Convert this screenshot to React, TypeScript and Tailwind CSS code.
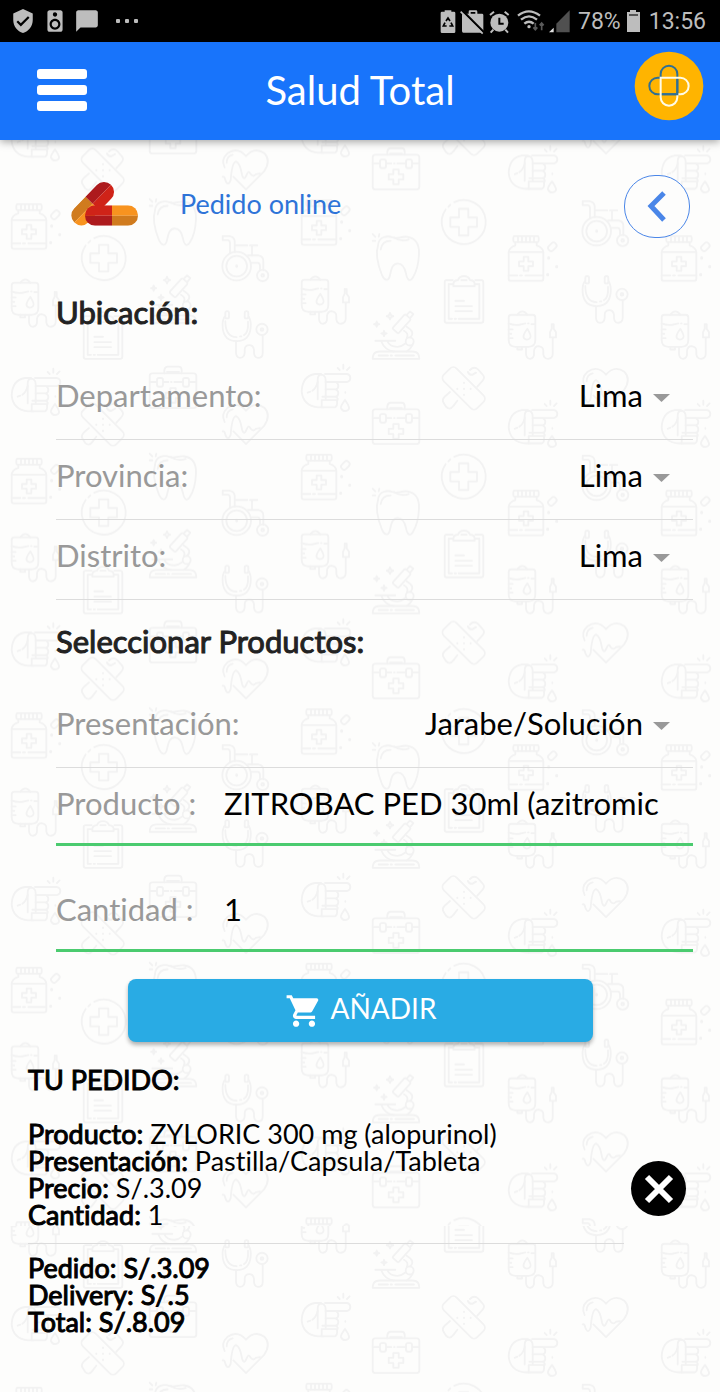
import React, { useState } from "react";
import { MdChatBubble, MdShoppingCart, MdSpeaker, MdVerifiedUser } from "react-icons/md";

type Glyph =
  | "hand" | "bottle" | "bag" | "bandage" | "plus" | "clipboard"
  | "case" | "tooth" | "scope" | "heart" | "chair" | "steth";

const glyphs: Record<Glyph, React.ReactNode> = {
  hand: (
    <>
      <path d="M60 30H42Q4 36 2 82Q6 126 52 130H66" />
      <path d="M72 30H138Q148 32 148 42Q148 52 138 54H74" />
      <path d="M50 106V48Q50 32 62 32Q74 34 74 50V106" />
      <path d="M74 54H104Q112 58 112 65Q112 75 104 76H74M104 76Q112 80 112 87Q112 97 104 98H64M104 98Q112 102 110 108H62V130H102Q110 126 108 110" />
      <path d="M20 86L28 83M34 80Q46 72 50 54M110 12L116 18M127 2V14M146 10L138 18M133 84V86" />
      <path d="M132 108Q118 126 120 132Q124 142 134 141Q146 138 144 130Q142 122 132 108Z" />
    </>
  ),
  bottle: (
    <>
      <rect x="16" y="2" width="76" height="18" rx="4" />
      <path d="M30 4V20M42 4V20M54 4V20M66 4V20M78 4V20" />
      <path d="M22 20V30Q2 36 2 52V130Q2 136 8 136H100Q106 136 106 130V52Q106 36 86 30V20" />
      <path d="M2 50H106M2 120H28M36 120H42M52 120H106" />
      <path d="M47 64H61V78H75V92H61V106H47V92H33V78H47Z" />
      <rect x="124" y="20" width="18" height="28" rx="8" transform="rotate(45 133 34)" />
      <path d="M122 67V68M146 93V94M119 117V118" strokeWidth="9" />
    </>
  ),
  bag: (
    <>
      <path d="M10 10H74Q82 10 82 18V86Q82 106 62 106H22Q2 106 2 86V18Q2 10 10 10Z" />
      <path d="M28 10Q34 0 43 0Q52 0 58 10M2 36Q22 44 42 38L52 36M60 36H62M70 38H82" />
      <path d="M2 54H14M2 67H10M2 80H14M58 52Q40 76 50 82Q58 88 66 80Q72 74 58 52Z" />
      <path d="M28 106V114H42V106M54 106V128Q56 142 66 142Q78 140 78 128V118Q80 104 92 104Q106 106 106 118V128Q108 142 120 142Q134 140 134 128V80" />
      <path d="M126 78V62L131 52V38H137V52L144 62V78Z" />
    </>
  ),
  bandage: (
    <>
      <path d="M84 12Q96 0 108 10L122 26Q130 34 122 44L106 62M46 104L34 120Q24 134 12 122L6 112Q-2 102 8 92L24 78" />
      <rect x="-6" y="40" width="142" height="54" rx="14" transform="rotate(45 65 67)" />
      <path d="M78 18Q82 28 92 26L102 20M66 50V51M46 68V69M66 68V69M86 68V69M66 86V87" strokeWidth="6" />
    </>
  ),
  plus: (
    <>
      <path d="M40 8A66 66 0 1 1 14 30M22 22L28 16" />
      <path d="M54 28H82V54H108V82H82V108H54V82H28V54H54Z" />
    </>
  ),
  clipboard: (
    <>
      <path d="M26 14H8Q2 14 2 20V136Q2 142 8 142H112Q118 142 118 136V20Q118 14 112 14H94" />
      <path d="M28 26H14V130H24M32 130H36M44 130H106V26H92" />
      <path d="M28 32V24Q30 14 42 14Q46 2 60 2Q74 2 78 14Q90 14 92 24V32ZM52 14H68M34 76H60M34 92H84M34 107H84" />
    </>
  ),
  case: (
    <>
      <rect x="2" y="22" width="140" height="104" rx="8" />
      <path d="M46 22V12Q48 2 56 2H88Q98 2 98 12V22M54 18H90" />
      <rect x="24" y="36" width="18" height="26" rx="6" />
      <rect x="102" y="36" width="18" height="26" rx="6" />
      <path d="M2 48H22M44 48H58M66 48H68M76 48H102M122 48H142" />
      <path d="M64 66H80V80H94V96H80V110H64V96H50V80H64Z" />
    </>
  ),
  tooth: (
    <>
      <path d="M18 36C20 8 48 6 62 12C76 18 86 8 106 10C132 14 142 30 141 60C140 90 134 115 122 133C112 148 104 135 102 120C98 100 90 90 77 90C62 90 58 105 54 125C50 145 38 142 30 125C18 95 10 60 18 36Z" />
      <path d="M26 48Q30 22 56 22M66 12Q86 26 110 18M2 2L10 10M2 22H10M22 2L20 10" />
    </>
  ),
  scope: (
    <>
      <path d="M2 142Q2 120 22 120H122Q142 120 142 142ZM20 132H48M56 132H60M70 132H126" />
      <path d="M10 88H70M28 90Q38 116 66 120M46 90Q54 106 76 106Q88 106 100 96M104 46Q132 62 114 78M122 100Q116 112 104 120M96 58Q112 66 104 80" />
      <circle cx="113" cy="90" r="12" />
      <rect x="77" y="8" width="24" height="58" rx="5" transform="rotate(42 89 37)" />
      <path d="M106 8L114 0L124 8L116 18" />
      <path d="M54 4L57 11L64 14L57 17L54 24L51 17L44 14L51 11ZM14 30L16 36L22 38L16 40L14 46L12 40L6 38L12 36ZM36 58L38 64L44 66L38 68L36 74L34 68L28 66L34 64Z" />
    </>
  ),
  heart: (
    <>
      <path d="M34 82L72 120L126 66Q148 34 128 12Q98 -10 72 20Q46 -10 16 12Q-4 30 8 54" />
      <path d="M2 82Q8 80 10 92Q18 112 26 92Q30 38 42 36Q54 40 60 76Q66 96 74 76Q80 60 86 74Q94 84 102 74L114 72M14 40Q14 20 32 16" />
    </>
  ),
  chair: (
    <>
      <path d="M2 14V2H22Q36 4 38 16V50M2 14H18Q24 16 24 22V52M40 30H76M84 30H106M90 30V60" />
      <circle cx="44" cy="92" r="43" />
      <circle cx="44" cy="92" r="31" />
      <path d="M44 91V93" strokeWidth="8" />
      <path d="M78 60H110Q124 62 124 76V104M88 82H108Q114 84 114 92V104" />
      <circle cx="122" cy="120" r="17" />
      <circle cx="122" cy="120" r="4" />
    </>
  ),
  steth: (
    <>
      <path d="M8 18Q0 30 2 52Q6 92 44 92Q82 92 86 52Q88 30 80 18M10 32Q10 80 44 80M54 78H58M66 74Q80 66 78 34" />
      <rect x="10" y="2" width="11" height="22" rx="5" />
      <rect x="68" y="2" width="11" height="22" rx="5" />
      <circle cx="120" cy="57" r="17" />
      <circle cx="120" cy="57" r="4" />
      <path d="M42 92V128Q44 142 54 142Q66 142 68 128V118Q68 104 82 104Q94 104 96 118V128Q98 142 108 142Q122 142 122 128V76" />
    </>
  ),
};

// Each entry: glyph, x and y inside one repeat of the wallpaper.
const wallpaper: [Glyph, number, number][] = [
  ["hand", 11, 6], ["bottle", 11, 96], ["bag", 11, 172],
  ["bandage", 81, 40], ["plus", 81, 128], ["clipboard", 83, 204],
  ["case", 149, 4], ["tooth", 149, 91], ["scope", 149, 168],
  ["heart", 222, 42], ["chair", 222, 128], ["steth", 222, 203],
  ["hand", 301, 2], ["bottle", 301, 92], ["bag", 301, 169],
  ["case", 372, 40], ["tooth", 372, 126], ["scope", 372, 204],
  ["bandage", 442, 4], ["plus", 441, 92], ["clipboard", 444, 168],
  ["hand", 508, 38], ["bottle", 508, 128], ["bag", 508, 204],
  ["heart", 582, 6], ["chair", 582, 93], ["steth", 582, 168],
  ["hand", 661, 38], ["bottle", 661, 128], ["bag", 661, 204],
];

function Wallpaper() {
  return (
    <svg className="absolute inset-0 h-full w-full" aria-hidden="true">
      <defs>
        <g id="medical-tile" fill="none" stroke="#f2f2f2" strokeWidth="5.5" strokeLinecap="round" strokeLinejoin="round">
          {wallpaper.map(([name, x, y], i) => (
            <g key={i} transform={`translate(${x} ${y}) scale(0.3333)`}>{glyphs[name]}</g>
          ))}
        </g>
        <pattern id="upper" patternUnits="userSpaceOnUse" x="0" y="-32.5" width="720" height="254.5">
          <use href="#medical-tile" />
        </pattern>
        <pattern id="lower" patternUnits="userSpaceOnUse" x="0" y="133" width="720" height="254.5">
          <use href="#medical-tile" />
        </pattern>
      </defs>
      <rect width="100%" height="1086" fill="url(#upper)" />
      <rect y="1086" width="100%" height="100%" fill="url(#lower)" />
    </svg>
  );
}

function StatusBar() {
  return (
    <div className="flex h-[42px] items-center justify-between bg-black pl-[10px] pr-[14px] text-[#bdbdbd]">
      <div className="flex items-center gap-[6px]">
        <MdVerifiedUser size={26} />
        <MdSpeaker size={26} />
        <MdChatBubble size={26} />
        <svg width="26" height="6" viewBox="0 0 26 6" fill="currentColor" className="ml-2">
          <rect x="2" y="1" width="4" height="4" rx="1" />
          <rect x="11" y="1" width="4" height="4" rx="1" />
          <rect x="20" y="1" width="4" height="4" rx="1" />
        </svg>
      </div>
      <div className="flex items-center pt-[2px] font-['Roboto',sans-serif] text-[23px]">
        <svg width="132" height="26" viewBox="0 0 396 78" fill="currentColor">
          <path d="M14 8V4H34V8H42Q46 8 46 12V68Q46 72 42 72H6Q2 72 2 68V12Q2 8 6 8Z" />
          <g fill="none" stroke="#000" strokeWidth="5">
            <path d="M18 36L24 27L30 36M15 41L10 51H20M28 51H38L33 41" />
          </g>
          <path fillRule="evenodd" d="M86 14V8Q86 4 90 4H108Q112 4 112 8V14H126Q130 14 130 18V68L126 71H70Q66 71 66 66V18Q66 14 70 14ZM92 14H106V9H92Z" />
          <path d="M66 4L134 72" stroke="#000" strokeWidth="7" />
          <path d="M62 8L128 74" stroke="currentColor" strokeWidth="5" />
          <circle cx="178" cy="41" r="27" />
          <path d="M150 18L162 8M206 18L194 8M160 62L152 71M196 62L204 71" stroke="currentColor" strokeWidth="6" />
          <path d="M178 26V44H191" fill="none" stroke="#000" strokeWidth="6" />
          <g fill="none" stroke="currentColor" strokeWidth="7">
            <path d="M234 20Q266 -6 300 20M243 32Q267 12 291 32M253 44Q267 32 281 44" />
          </g>
          <circle cx="267" cy="53" r="5" />
          <g stroke="#5a5a5a" strokeWidth="5" fill="none">
            <path d="M286 42V62M280 55L286 62L292 55M305 64V42M299 49L305 42L311 49" />
          </g>
          <path d="M389 4V70H349V44Z" fill="#505050" />
          <path d="M341 56V70H327Z" fill="#e0e0e0" />
        </svg>
        <span className="ml-[6px]">78%</span>
        <svg width="15" height="24" viewBox="0 0 15 24" className="ml-[5px]">
          <path d="M4 0H10V2H14V22H1V2H4Z" fill="#bdbdbd" />
          <path d="M3 5H12" stroke="#555" strokeWidth="2" />
        </svg>
        <span className="ml-2">13:56</span>
      </div>
    </div>
  );
}

function Header() {
  return (
    <header className="relative z-10 grid h-[98px] grid-cols-[1fr_auto_1fr] items-center bg-[#1874fb] px-4 pb-[2px] shadow-[0_2px_8px_rgba(0,0,0,0.35)]">
      <button aria-label="Menú" className="ml-[21px] flex w-[50px] flex-col gap-[6px]">
        <span className="h-[10px] w-full rounded-[3px] bg-white" />
        <span className="h-[10px] w-full rounded-[3px] bg-white" />
        <span className="h-[10px] w-full rounded-[3px] bg-white" />
      </button>
      <h1 className="text-[40px] leading-[48px] text-white">Salud Total</h1>
      <svg viewBox="0 0 210 210" className="mt-[9px] size-[70px] self-start justify-self-end" aria-hidden="true">
        <circle cx="105" cy="105" r="103" fill="#ffb400" />
        <g fill="none" strokeWidth="6">
          <path d="M80 80V69A25 25 0 0 1 130 69V130H71A25 25 0 0 1 71 80Z" stroke="#2f6f94" />
          <path d="M80 80H139A25 25 0 0 1 139 130H130V139A25 25 0 0 1 80 139Z" stroke="#fffbe6" />
          <path d="M130 84V130H84" stroke="#2f6f94" />
        </g>
      </svg>
    </header>
  );
}

function Pills() {
  return (
    <svg width="69" height="46" viewBox="210 152 207 138" aria-hidden="true">
      <defs>
        <clipPath id="tilted"><rect x="-79" y="-30" width="158" height="60" rx="30" /></clipPath>
        <clipPath id="flat"><rect x="255" y="225" width="159" height="61" rx="30" /></clipPath>
      </defs>
      <g transform="translate(278 220) rotate(-46)" clipPath="url(#tilted)">
        <path d="M-80 -31H0V0H-80Z" fill="#d07b1e" />
        <path d="M-80 0H0V31H-80Z" fill="#f8931f" />
        <path d="M0 -31H80V0H0Z" fill="#ad1a1d" />
        <path d="M0 0H80V31H0Z" fill="#cf2318" />
      </g>
      <g clipPath="url(#flat)">
        <path d="M255 225H336V256H255Z" fill="#cf2318" />
        <path d="M255 256H336V286H255Z" fill="#ad1a1d" />
        <path d="M336 225H414V256H336Z" fill="#f8931f" />
        <path d="M336 256H414V286H336Z" fill="#d07b1e" />
      </g>
    </svg>
  );
}

function SelectRow({ id, label, value }: { id: string; label: string; value: string }) {
  return (
    <div className="flex h-20 items-center justify-between border-b border-[#dcdcdc] pb-[10px] pr-[23px]">
      <label htmlFor={id} className="text-[#999]">{label}</label>
      <div className="flex items-center gap-[10px]">
        <select id={id} className="field-sizing-content appearance-none bg-transparent text-right text-black outline-none">
          <option>{value}</option>
        </select>
        <svg width="17" height="8" viewBox="0 0 17 8" className="mt-[6px]" aria-hidden="true">
          <path d="M0 0H17L8.5 8Z" fill="#999" />
        </svg>
      </div>
    </div>
  );
}

function InputRow({ id, label, initial }: { id: string; label: string; initial: string }) {
  const [value, setValue] = useState(initial);
  return (
    <div className="flex h-[78px] items-center border-b-[3px] border-[#4bcb6f] pb-[6px] pr-[22px]">
      <label htmlFor={id} className="w-[168px] shrink-0 text-[#999]">{label}</label>
      <input
        id={id}
        value={value}
        onChange={(e) => setValue(e.target.value)}
        className="min-w-0 flex-1 bg-transparent text-black outline-none"
      />
    </div>
  );
}

const strong = "font-normal [-webkit-text-stroke:1px_currentColor]";

function Line({ name, value }: { name: string; value: string }) {
  return (
    <p>
      <b className={strong}>{name}</b> {value}
    </p>
  );
}

export default function App() {
  return (
    <div className="flex min-h-screen flex-col bg-[#fdfdfc] font-['Lato','Open_Sans',sans-serif] [font-variant-ligatures:none]">
      <StatusBar />
      <Header />
      <main className="relative flex-1 overflow-hidden">
        <Wallpaper />
        <div className="relative pb-14">
          <div className="flex items-start pl-[70px] pr-[30px] pt-[35px]">
            <div className="pt-[6px]"><Pills /></div>
            <h2 className="ml-[41px] flex-1 pt-[11px] text-[27px] leading-[36px] text-[#2e74d8]">Pedido online</h2>
            <button aria-label="Volver" className="flex h-[63px] w-[66px] items-center justify-center rounded-[31px] border border-[#4a86e8] bg-[#fdfdfc]">
              <svg width="20" height="32" viewBox="0 0 20 32" fill="none" stroke="#4a86e8" strokeWidth="5">
                <path d="M17 2L4 15L17 29" />
              </svg>
            </button>
          </div>

          <form className="pl-14 pr-[27px] text-[31px] leading-[40px]" onSubmit={(e) => e.preventDefault()}>
            <h3 className={`pb-[28px] pt-[54px] text-[#222] ${strong}`}>Ubicación:</h3>
            <SelectRow id="departamento" label="Departamento:" value="Lima" />
            <SelectRow id="provincia" label="Provincia:" value="Lima" />
            <SelectRow id="distrito" label="Distrito:" value="Lima" />
            <h3 className={`pb-[27px] pt-[21px] text-[#222] ${strong}`}>Seleccionar Productos:</h3>
            <SelectRow id="presentacion" label="Presentación:" value="Jarabe/Solución" />
            <InputRow id="producto" label="Producto :" initial="ZITROBAC PED 30ml (azitromic" />
            <div className="h-7" />
            <InputRow id="cantidad" label="Cantidad :" initial="1" />
            <button
              type="submit"
              className="ml-[72px] mr-[100px] mt-[27px] flex h-[63px] w-[calc(100%-172px)] items-center justify-center gap-2 rounded-lg bg-[#29abe4] text-[28px] text-white shadow-[0_3px_4px_rgba(0,0,0,0.3)]"
            >
              <MdShoppingCart size={38} />
              <span className="pb-[6px]">AÑADIR</span>
            </button>
          </form>

          <section className="pl-[28px] pr-[34px] text-[27px] leading-[27px] text-black">
            <h3 className={`pt-[24px] ${strong}`}>TU PEDIDO:</h3>
            <div className="mt-[27px] flex items-center gap-[7px]">
              <div className="flex-1 border-b border-[#dcdcdc] pb-[15px]">
                <Line name="Producto:" value="ZYLORIC 300 mg (alopurinol)" />
                <Line name="Presentación:" value="Pastilla/Capsula/Tableta" />
                <Line name="Precio:" value="S/.3.09" />
                <Line name="Cantidad:" value="1" />
              </div>
              <button aria-label="Eliminar" className="mt-3 size-[55px] rounded-full bg-black">
                <svg viewBox="0 0 55 55" fill="none" stroke="#fff" strokeWidth="6">
                  <path d="M16 16L40 40M40 16L16 40" />
                </svg>
              </button>
            </div>
            <div className={`mt-[10px] ${strong}`}>
              <p>Pedido: S/.3.09</p>
              <p>Delivery: S/.5</p>
              <p>Total: S/.8.09</p>
            </div>
          </section>
        </div>
      </main>
    </div>
  );
}
